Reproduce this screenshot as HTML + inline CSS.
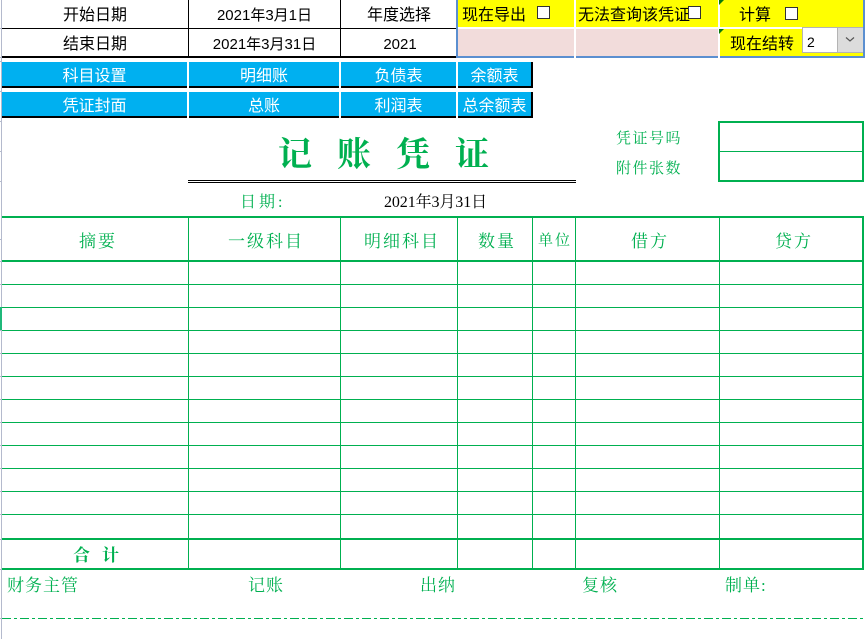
<!DOCTYPE html>
<html lang="zh-CN"><head><meta charset="utf-8"><title>记账凭证</title>
<style>
html,body{margin:0;padding:0;background:#fff;width:867px;height:639px;overflow:hidden}
#p{position:relative;width:867px;height:639px;overflow:hidden;font-family:"Liberation Sans","WenQuanYi Zen Hei","Noto Sans CJK SC",sans-serif;font-size:16px;color:#000}
#p div{position:absolute}
.t{white-space:nowrap;text-align:center;line-height:20px;height:20px}
.w{color:#fff}
.g{font-family:"Liberation Serif","Noto Serif CJK SC",serif;color:#00b050;white-space:nowrap;line-height:20px;height:20px}
.k{background:#000}.e{background:#00b050}.b{background:#00b0f0}.y{background:#ff0}.n{background:#f2dcdb}.l{background:#5b8fd0}
.c{width:11px;height:11px;border:1px solid #333;background:#fff}
.f{width:0;height:0;border-top:5px solid #0a7a0a;border-right:5px solid transparent}
.r{left:0;width:1px;height:1px;background:#b4bacd}
</style></head><body><div id="p">
<!-- rail -->
<div style="left:1px;top:0;width:1px;height:639px;background:#b4bacd"></div>
<div class="r" style="top:28px"></div>
<div class="r" style="top:57px"></div>
<div class="r" style="top:61px"></div>
<div class="r" style="top:91px"></div>
<div class="r" style="top:121px"></div>
<div class="r" style="top:151px"></div>
<div class="r" style="top:181px"></div>
<div class="r" style="top:239px"></div>
<div class="r" style="top:261px"></div>
<div class="r" style="top:284px"></div>
<div class="r" style="top:330px"></div>
<div class="r" style="top:353px"></div>
<div class="r" style="top:376px"></div>
<div class="r" style="top:399px"></div>
<div class="r" style="top:422px"></div>
<div class="r" style="top:445px"></div>
<div class="r" style="top:468px"></div>
<div class="r" style="top:491px"></div>
<div class="r" style="top:514px"></div>
<div class="r" style="top:539px"></div>
<div class="r" style="top:569px"></div>
<div class="r" style="top:618px"></div>
<div style="left:0;top:307px;width:2px;height:23px;background:#1fb87a"></div>

<!-- header grid -->
<div class="k" style="left:2px;top:28px;width:455px;height:1px"></div>
<div class="k" style="left:2px;top:56px;width:455px;height:2px"></div>
<div class="k" style="left:188px;top:0;width:1px;height:56px"></div>
<div class="k" style="left:340px;top:0;width:1px;height:56px"></div>
<div class="t" style="left:2px;top:6px;width:186px">开始日期</div>
<div class="t" style="left:189px;top:6px;width:151px;font-size:15px">2021年3月1日</div>
<div class="t" style="left:341px;top:6px;width:116px">年度选择</div>
<div class="t" style="left:2px;top:35px;width:186px">结束日期</div>
<div class="t" style="left:189px;top:35px;width:151px;font-size:15px">2021年3月31日</div>
<div class="t" style="left:342px;top:35px;width:116px;font-size:15px">2021</div>

<!-- yellow panel -->
<div class="y" style="left:458px;top:0;width:116px;height:27px"></div>
<div class="y" style="left:576px;top:0;width:142px;height:27px"></div>
<div class="y" style="left:720px;top:0;width:143px;height:27px"></div>
<div class="n" style="left:458px;top:29px;width:116px;height:27px"></div>
<div class="n" style="left:576px;top:29px;width:142px;height:27px"></div>
<div class="y" style="left:720px;top:29px;width:143px;height:27px"></div>
<div class="l" style="left:456px;top:0;width:2px;height:58px"></div>
<div class="l" style="left:456px;top:56px;width:118px;height:2px"></div>
<div class="l" style="left:576px;top:56px;width:142px;height:2px"></div>
<div class="l" style="left:720px;top:56px;width:145px;height:2px"></div>
<div class="l" style="left:863px;top:0;width:2px;height:58px"></div>
<div class="f" style="left:719px;top:0"></div>
<div class="f" style="left:719px;top:29px"></div>
<div class="t" style="left:462px;top:6px">现在导出</div>
<div class="c" style="left:537px;top:6px"></div>
<div class="t" style="left:578px;top:6px">无法查询该凭证</div>
<div class="c" style="left:688px;top:6px"></div>
<div class="t" style="left:739px;top:6px">计算</div>
<div class="c" style="left:785px;top:7px"></div>
<div class="t" style="left:730px;top:35px">现在结转</div>
<div style="left:802px;top:27px;width:59px;height:24px;border:1px solid #b4b4b4;background:#fff"></div>
<div style="left:837px;top:28px;width:25px;height:24px;background:#dcdcdc;border-left:1px solid #b4b4b4"></div>
<div class="t" style="left:807px;top:32px;font-size:14px">2</div>
<svg style="position:absolute;left:845px;top:36px" width="10" height="7" viewBox="0 0 10 7"><path d="M1 1.5L5 5L9 1.5" fill="none" stroke="#555" stroke-width="1.2"/></svg>

<!-- buttons -->
<div class="b" style="left:2px;top:62px;width:185px;height:24px"></div>
<div class="b" style="left:189px;top:62px;width:150px;height:24px"></div>
<div class="b" style="left:341px;top:62px;width:115px;height:24px"></div>
<div class="b" style="left:458px;top:62px;width:73px;height:24px"></div>
<div class="k" style="left:2px;top:86px;width:185px;height:2px"></div>
<div class="k" style="left:189px;top:86px;width:150px;height:2px"></div>
<div class="k" style="left:341px;top:86px;width:115px;height:2px"></div>
<div class="k" style="left:458px;top:86px;width:75px;height:2px"></div>
<div class="k" style="left:531px;top:62px;width:2px;height:26px"></div>
<div class="b" style="left:2px;top:92px;width:185px;height:24px"></div>
<div class="b" style="left:189px;top:92px;width:150px;height:24px"></div>
<div class="b" style="left:341px;top:92px;width:115px;height:24px"></div>
<div class="b" style="left:458px;top:92px;width:73px;height:24px"></div>
<div class="k" style="left:2px;top:116px;width:185px;height:2px"></div>
<div class="k" style="left:189px;top:116px;width:150px;height:2px"></div>
<div class="k" style="left:341px;top:116px;width:115px;height:2px"></div>
<div class="k" style="left:458px;top:116px;width:75px;height:2px"></div>
<div class="k" style="left:531px;top:92px;width:2px;height:26px"></div>
<div class="t w" style="left:2px;top:67px;width:185px">科目设置</div>
<div class="t w" style="left:189px;top:67px;width:150px">明细账</div>
<div class="t w" style="left:341px;top:67px;width:115px">负债表</div>
<div class="t w" style="left:458px;top:67px;width:73px">余额表</div>
<div class="t w" style="left:2px;top:97px;width:185px">凭证封面</div>
<div class="t w" style="left:189px;top:97px;width:150px">总账</div>
<div class="t w" style="left:341px;top:97px;width:115px">利润表</div>
<div class="t w" style="left:458px;top:97px;width:73px">总余额表</div>

<!-- title -->
<div class="g" style="left:278px;top:136px;height:40px;line-height:40px;font-size:34px;font-weight:700;letter-spacing:25px">记账凭证</div>
<div class="k" style="left:188px;top:180px;width:388px;height:1px"></div>
<div class="k" style="left:188px;top:182px;width:388px;height:1px"></div>
<div class="g" style="left:240px;top:193px;font-size:16px;letter-spacing:3px">日期:</div>
<div class="t" style="left:384px;top:193px;font-family:'Liberation Serif','Noto Serif CJK SC',serif;font-size:16px;letter-spacing:-.1px">2021年3月31日</div>

<!-- number box -->
<div class="g" style="left:616px;top:129px;font-size:15px;letter-spacing:1.5px">凭证号吗</div>
<div class="g" style="left:616px;top:159px;font-size:15px;letter-spacing:1.5px">附件张数</div>
<div class="e" style="left:718px;top:121px;width:146px;height:2px"></div>
<div class="e" style="left:718px;top:151px;width:146px;height:1px"></div>
<div class="e" style="left:718px;top:180px;width:146px;height:2px"></div>
<div class="e" style="left:718px;top:121px;width:2px;height:61px"></div>
<div class="e" style="left:862px;top:121px;width:2px;height:61px"></div>

<!-- table horizontals -->
<div class="e" style="left:2px;top:216px;width:862px;height:2px"></div>
<div class="e" style="left:2px;top:260px;width:862px;height:2px"></div>
<div class="e" style="left:2px;top:284px;width:862px;height:1px"></div>
<div class="e" style="left:2px;top:307px;width:862px;height:1px"></div>
<div class="e" style="left:2px;top:330px;width:862px;height:1px"></div>
<div class="e" style="left:2px;top:353px;width:862px;height:1px"></div>
<div class="e" style="left:2px;top:376px;width:862px;height:1px"></div>
<div class="e" style="left:2px;top:399px;width:862px;height:1px"></div>
<div class="e" style="left:2px;top:422px;width:862px;height:1px"></div>
<div class="e" style="left:2px;top:445px;width:862px;height:1px"></div>
<div class="e" style="left:2px;top:468px;width:862px;height:1px"></div>
<div class="e" style="left:2px;top:491px;width:862px;height:1px"></div>
<div class="e" style="left:2px;top:514px;width:862px;height:1px"></div>
<div class="e" style="left:2px;top:538px;width:862px;height:2px"></div>
<div class="e" style="left:2px;top:568px;width:862px;height:2px"></div>
<!-- table verticals -->
<div class="e" style="left:188px;top:216px;width:1px;height:353px"></div>
<div class="e" style="left:340px;top:216px;width:1px;height:353px"></div>
<div class="e" style="left:457px;top:216px;width:1px;height:353px"></div>
<div class="e" style="left:532px;top:216px;width:1px;height:353px"></div>
<div class="e" style="left:575px;top:216px;width:1px;height:353px"></div>
<div class="e" style="left:719px;top:216px;width:1px;height:353px"></div>
<div class="e" style="left:862px;top:216px;width:2px;height:354px"></div>

<!-- table header text -->
<div class="g" style="left:79px;top:232px;font-size:17px;letter-spacing:2px">摘要</div>
<div class="g" style="left:228px;top:232px;font-size:17px;letter-spacing:2px">一级科目</div>
<div class="g" style="left:364px;top:232px;font-size:17px;letter-spacing:2px">明细科目</div>
<div class="g" style="left:478px;top:232px;font-size:17px;letter-spacing:2px">数量</div>
<div class="g" style="left:538px;top:231px;font-size:15px;letter-spacing:2px">单位</div>
<div class="g" style="left:631px;top:232px;font-size:17px;letter-spacing:2px">借方</div>
<div class="g" style="left:775px;top:232px;font-size:17px;letter-spacing:2px">贷方</div>
<div class="g" style="left:73px;top:546px;font-size:17px;font-weight:700;letter-spacing:12px">合计</div>

<!-- footer -->
<div class="g" style="left:7px;top:576px;font-size:17px;letter-spacing:1px">财务主管</div>
<div class="g" style="left:248px;top:576px;font-size:17px;letter-spacing:1px">记账</div>
<div class="g" style="left:420px;top:576px;font-size:17px;letter-spacing:1px">出纳</div>
<div class="g" style="left:582px;top:576px;font-size:17px;letter-spacing:1px">复核</div>
<div class="g" style="left:725px;top:576px;font-size:17px;letter-spacing:1px">制单:</div>
<svg style="position:absolute;left:2px;top:618px" width="863" height="1"><line x1="0" y1="0.5" x2="863" y2="0.5" stroke="#00b050" stroke-width="1" stroke-dasharray="9 3 3 3"/></svg>
</div></body></html>
